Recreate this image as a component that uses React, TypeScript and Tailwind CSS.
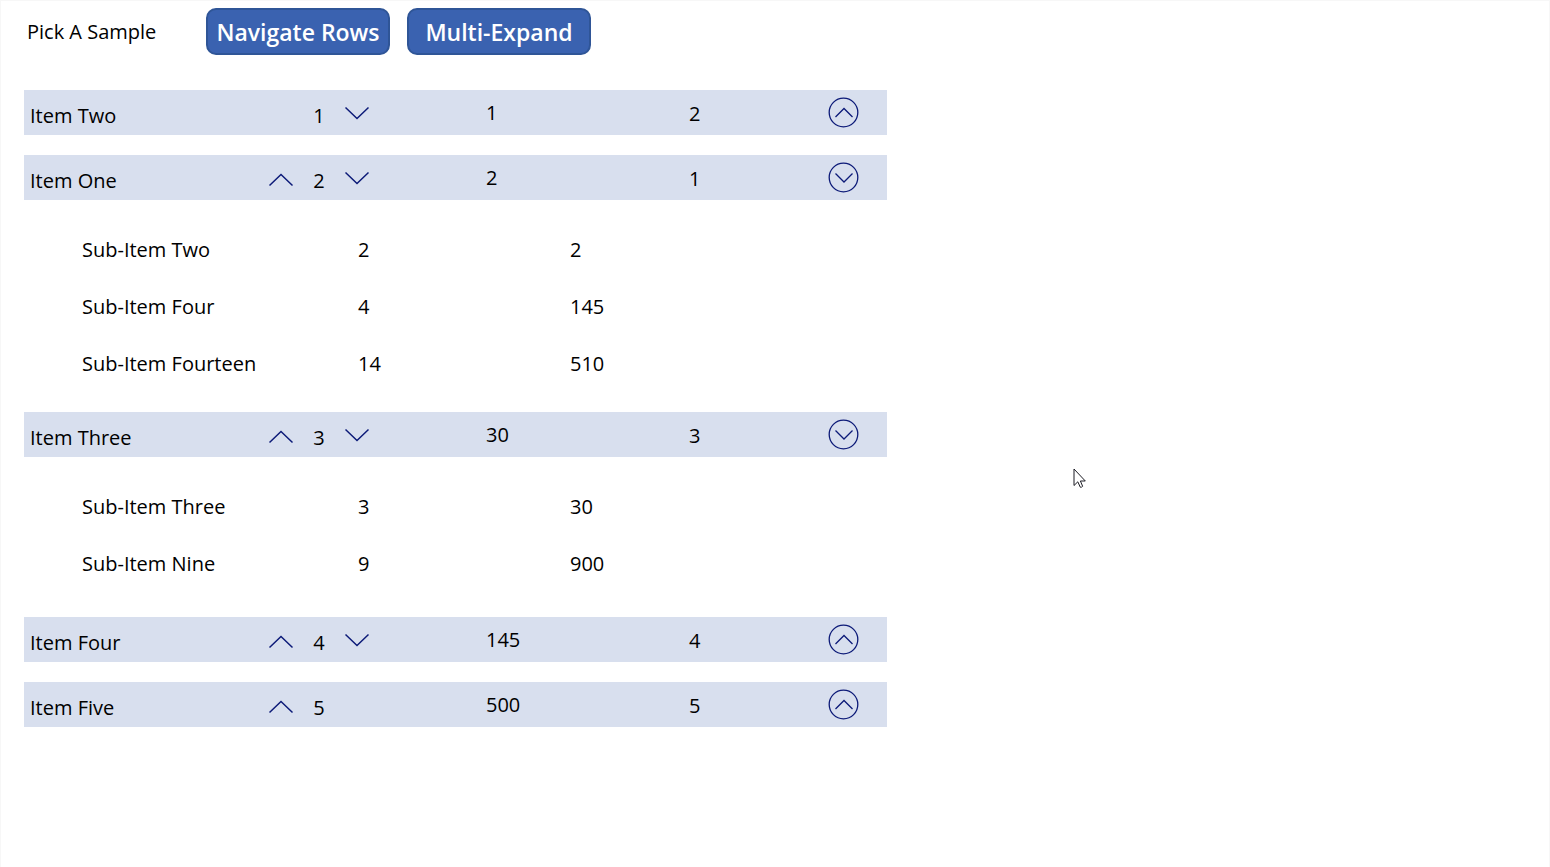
import { useState } from "react";

type SubItem = { name: string; order: number; value: number };
type Item = { name: string; order: number; total: number; id: number; open: boolean; subItems: SubItem[] };

const initialItems: Item[] = [
  { name: "Item Two", order: 1, total: 1, id: 2, open: false, subItems: [] },
  {
    name: "Item One",
    order: 2,
    total: 2,
    id: 1,
    open: true,
    subItems: [
      { name: "Sub-Item Two", order: 2, value: 2 },
      { name: "Sub-Item Four", order: 4, value: 145 },
      { name: "Sub-Item Fourteen", order: 14, value: 510 },
    ],
  },
  {
    name: "Item Three",
    order: 3,
    total: 30,
    id: 3,
    open: true,
    subItems: [
      { name: "Sub-Item Three", order: 3, value: 30 },
      { name: "Sub-Item Nine", order: 9, value: 900 },
    ],
  },
  { name: "Item Four", order: 4, total: 145, id: 4, open: false, subItems: [] },
  { name: "Item Five", order: 5, total: 500, id: 5, open: false, subItems: [] },
];

function Chevron({ up }: { up?: boolean }) {
  return (
    <svg width="26" height="16" viewBox="0 0 26 16" fill="none" stroke="#0c1a78" strokeWidth="1.5" aria-hidden="true">
      <path d={up ? "M1.5 13.5 13 2.5 24.5 13.5" : "M1.5 2.5 13 13.5 24.5 2.5"} />
    </svg>
  );
}

function CircleChevron({ up }: { up?: boolean }) {
  return (
    <svg width="31" height="31" viewBox="0 0 31 31" fill="none" stroke="#0c1a78" strokeWidth="1.3" aria-hidden="true">
      <circle cx="15.5" cy="15.5" r="14.3" />
      <path d={up ? "M7.5 20 16 11.5 24.5 20" : "M7.5 11.5 16 20 24.5 11.5"} />
    </svg>
  );
}

function Pointer() {
  return (
    <svg width="13" height="21" viewBox="0 0 13 21" fill="#fff" stroke="#1c1c24" strokeWidth="1" aria-hidden="true">
      <path d="M1 1V17.5L4.8 13.8L7.3 19.2Q8.7 19.8 9.6 18.2L7.4 13H12.3Z" />
    </svg>
  );
}

function SubItems({ item }: { item: Item }) {
  return (
    <div className="min-h-[140px] pt-[21px] pl-[58px]">
      <table className="w-full table-fixed text-left" aria-label={`${item.name} details`}>
        <colgroup>
          <col className="w-[276px]" />
          <col className="w-[212px]" />
          <col />
        </colgroup>
        <tbody>
          {item.subItems.map((sub) => (
            <tr key={sub.name} className="h-[57px]">
              <td className="p-0">{sub.name}</td>
              <td className="p-0">{sub.order}</td>
              <td className="p-0">{sub.value}</td>
            </tr>
          ))}
        </tbody>
      </table>
    </div>
  );
}

export default function App() {
  const [items, setItems] = useState(initialItems);

  const toggle = (id: number) =>
    setItems(items.map((item) => (item.id === id ? { ...item, open: !item.open } : item)));

  return (
    <div className="relative min-h-screen border-x border-t border-[#f7f7f7] bg-white pt-[7px] pl-[23px] font-['Open_Sans',sans-serif] text-[20px] leading-7 text-black">
      <header className="flex items-center">
        <span className="w-[182px] pl-[3px]">Pick A Sample</span>
        <nav className="flex gap-[17px] text-[23px] font-semibold text-white">
          <button className="h-[47px] w-[184px] rounded-[10px] border-2 border-[#2f5597] bg-[#3a62b0] whitespace-nowrap">
            Navigate Rows
          </button>
          <button className="h-[47px] w-[184px] rounded-[10px] border-2 border-[#2f5597] bg-[#3a62b0] whitespace-nowrap">
            Multi-Expand
          </button>
        </nav>
      </header>

      <ul className="mt-[35px] flex max-w-[863px] flex-col gap-5">
        {items.map((item, index) => (
          <li key={item.id}>
            <div className="grid h-[45px] grid-cols-[232px_38px_38px_38px_110px_203px_132px_45px] items-center bg-[#d8dfee] pl-[6px]">
              <span className="pt-[6px]">{item.name}</span>
              <span className="flex justify-center">
                {index > 0 && (
                  <button aria-label={`Move ${item.name} up`} className="pt-1">
                    <Chevron up />
                  </button>
                )}
              </span>
              <span className="pt-[6px] text-center">{item.order}</span>
              <span className="flex justify-center">
                {index < items.length - 1 && (
                  <button aria-label={`Move ${item.name} down`}>
                    <Chevron />
                  </button>
                )}
              </span>
              <span />
              <span>{item.total}</span>
              <span className="pt-[2px]">{item.id}</span>
              <button
                aria-label={`Toggle ${item.name}`}
                aria-expanded={item.open}
                onClick={() => toggle(item.id)}
                className="flex justify-center"
              >
                <CircleChevron up={!item.open} />
              </button>
            </div>
            {item.open && <SubItems item={item} />}
          </li>
        ))}
      </ul>

      <div className="pointer-events-none absolute top-[467px] left-[1072px]">
        <Pointer />
      </div>
    </div>
  );
}
